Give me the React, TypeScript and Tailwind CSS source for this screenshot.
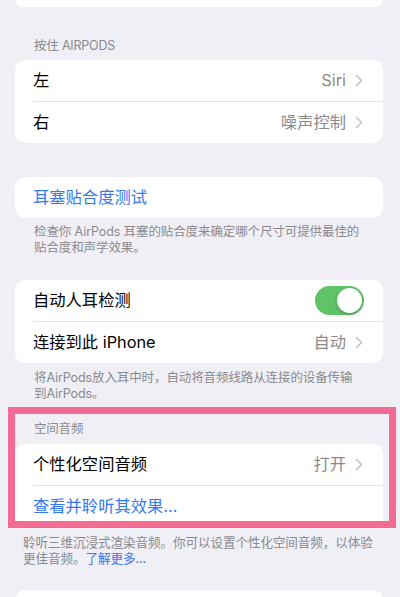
import React from "react";

const font = { fontFamily: 'Inter, "Noto Sans CJK SC", sans-serif' };

function Chevron() {
  return (
    <svg width="8" height="13" viewBox="0 0 8 13" className="ml-[9px] shrink-0">
      <path d="M1.5 1.5 L6.5 6.5 L1.5 11.5" fill="none" stroke="#c4c4c8" strokeWidth="1.7" strokeLinecap="round" strokeLinejoin="round" />
    </svg>
  );
}

function Row({ label, value, blue, toggle }: { label: string; value?: string; blue?: boolean; toggle?: boolean }) {
  return (
    <div className="flex h-[41px] items-center pl-[18px] pr-[20px]">
      <span className={`flex-1 text-[16.3px] leading-none ${blue ? "text-[#3478f6]" : "text-black"}`}>{label}</span>
      {value && (
        <>
          <span className="text-[16.3px] leading-none text-[#8a8a8e]">{value}</span>
          <Chevron />
        </>
      )}
      {toggle && (
        <div className="-mr-[1px] flex h-[29px] w-[49px] items-center justify-end rounded-full bg-[#5fc467] p-[2px]">
          <div className="h-[25px] w-[25px] rounded-full bg-white shadow-[0_2px_4px_rgba(0,0,0,0.2)]" />
        </div>
      )}
    </div>
  );
}

function Divider() {
  return <div className="ml-[18px] h-px bg-[#e3e3e6]" />;
}

function Card({ children }: { children: React.ReactNode }) {
  return <div className="ml-[15px] w-[368px] overflow-hidden rounded-[10px] bg-white">{children}</div>;
}

function Header({ text }: { text: string }) {
  return <div className="pl-[34px] text-[12.5px] leading-[16px] tracking-[-0.2px] text-[#8a8a8e]">{text}</div>;
}

function Footer({ children, wide }: { children: React.ReactNode; wide?: boolean }) {
  return (
    <div
      className={`${wide ? "pl-[23px] text-[12.6px]" : "pl-[34px] text-[12.5px]"} whitespace-nowrap leading-[16px] tracking-[-0.1px] text-[#8a8a8e]`}
    >
      {children}
    </div>
  );
}

export default function App() {
  return (
    <div className="relative h-[597px] w-[400px] overflow-hidden bg-[#f0eff5]" style={font}>
      <div className="ml-[15px] h-[7px] w-[368px] rounded-b-[8px] bg-white" />

      <div className="mt-[31px]">
        <Header text="按住 AIRPODS" />
      </div>
      <div className="mt-[6px]">
        <Card>
          <Row label="左" value="Siri" />
          <Divider />
          <Row label="右" value="噪声控制" />
        </Card>
      </div>

      <div className="mt-[34px]">
        <Card>
          <Row label="耳塞贴合度测试" blue />
        </Card>
      </div>
      <div className="mt-[6px]">
        <Footer>
          检查你 AirPods 耳塞的贴合度来确定哪个尺寸可提供最佳的
          <br />
          贴合度和声学效果。
        </Footer>
      </div>

      <div className="mt-[24px]">
        <Card>
          <Row label="自动人耳检测" toggle />
          <Divider />
          <Row label="连接到此 iPhone" value="自动" />
        </Card>
      </div>
      <div className="mt-[7px]">
        <Footer>
          将AirPods放入耳中时，自动将音频线路从连接的设备传输
          <br />
          到AirPods。
        </Footer>
      </div>

      <div className="mt-[19px]">
        <Header text="空间音频" />
      </div>
      <div className="mt-[7px]">
        <Card>
          <Row label="个性化空间音频" value="打开" />
          <Divider />
          <div className="h-[42px]">
            <Row label="查看并聆听其效果..." blue />
          </div>
        </Card>
      </div>
      <div className="mt-[7px]">
        <Footer wide>
          聆听三维沉浸式渲染音频。你可以设置个性化空间音频，以体验
          <br />
          更佳音频。<span className="text-[#3478f6]">了解更多...</span>
        </Footer>
      </div>

      <div className="ml-[15px] mt-[23px] h-[40px] w-[368px] rounded-t-[10px] bg-white" />

      {/* highlight frame drawn over the spatial audio section */}
      <div className="pointer-events-none absolute left-[8px] top-[407px] h-[121px] w-[388px] border-[7px] border-[#f26b93]" />
    </div>
  );
}
